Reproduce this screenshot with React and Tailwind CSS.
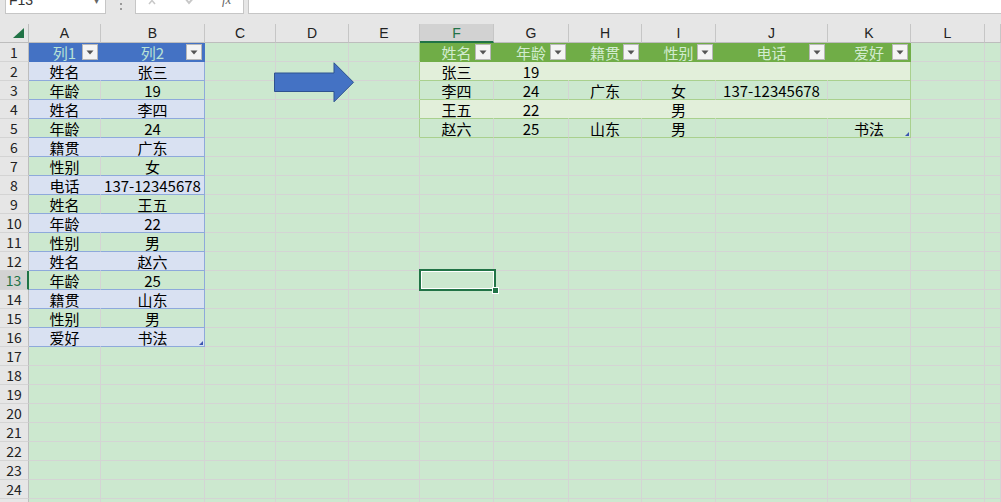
import React from "react";

const LETTERS = ["A", "B", "C", "D", "E", "F", "G", "H", "I", "J", "K", "L", "M"];
const ROWS = 25;

const LEFT = [
  ["列1", "列2"],
  ["姓名", "张三"],
  ["年龄", "19"],
  ["姓名", "李四"],
  ["年龄", "24"],
  ["籍贯", "广东"],
  ["性别", "女"],
  ["电话", "137-12345678"],
  ["姓名", "王五"],
  ["年龄", "22"],
  ["性别", "男"],
  ["姓名", "赵六"],
  ["年龄", "25"],
  ["籍贯", "山东"],
  ["性别", "男"],
  ["爱好", "书法"],
];

const RIGHT = [
  ["姓名", "年龄", "籍贯", "性别", "电话", "爱好"],
  ["张三", "19", "", "", "", ""],
  ["李四", "24", "广东", "女", "137-12345678", ""],
  ["王五", "22", "", "男", "", ""],
  ["赵六", "25", "山东", "男", "", "书法"],
];

function Dropdown() {
  return (
    <div className="absolute right-[2px] top-[1px] flex h-[16px] w-[16px] items-center justify-center border border-[#b8b8b8] bg-[#f4f4f4]">
      <svg width="8" height="5" viewBox="0 0 8 5">
        <path d="M0.5 0.5 L7.5 0.5 L4 4.5 Z" fill="#555" />
      </svg>
    </div>
  );
}

function Cell({ r, c }) {
  // r: 1-based row, c: 0-based column
  let bg = "bg-[#cce8cf]";
  let br = "border-r-[#d4d4d4]";
  let bb = "border-b-[#d4d4d4]";
  let text = "";
  let color = "text-black";
  let header = false;
  let corner = false;

  if (c <= 1 && r <= 16) {
    text = LEFT[r - 1][c];
    if (r === 1) {
      header = true;
      bg = "bg-[#4472c4]";
      br = "border-r-[#4472c4]";
      bb = "border-b-[#4472c4]";
      color = "text-[#b8e2d6]";
    } else if (r % 2 === 0) {
      bg = "bg-[#d9e1f2]";
      br = c === 1 ? "border-r-[#8ea9db]" : "border-r-[#d9e1f2]";
      bb = "border-b-[#8ea9db]";
    } else {
      br = c === 1 ? "border-r-[#8ea9db]" : "border-r-[#d4d4d4]";
      bb = "border-b-[#8ea9db]";
    }
    if (r === 16 && c === 1) corner = true;
  } else if (c >= 5 && c <= 10 && r <= 5) {
    text = RIGHT[r - 1][c - 5];
    if (r === 1) {
      header = true;
      bg = "bg-[#70ad47]";
      br = "border-r-[#70ad47]";
      bb = "border-b-[#70ad47]";
      color = "text-[#d2ecd0]";
    } else if (r % 2 === 0) {
      bg = "bg-[#e2efda]";
      br = c === 10 ? "border-r-[#a9d08e]" : "border-r-[#e2efda]";
      bb = "border-b-[#a9d08e]";
    } else {
      br = c === 10 ? "border-r-[#a9d08e]" : "border-r-[#d4d4d4]";
      bb = "border-b-[#a9d08e]";
    }
    if (r === 5 && c === 10) corner = true;
  } else if (c === 4 && r <= 5) {
    br = "border-r-[#a9d08e]";
  }

  return (
    <div
      className={`relative flex items-center justify-center overflow-visible whitespace-nowrap border-r border-b text-[15px] leading-none ${bg} ${br} ${bb} ${color}`}
    >
      <span className="pt-[1px]">{text}</span>
      {header && <Dropdown />}
      {corner && (
        <svg className="absolute bottom-[1px] right-[1px]" width="4" height="4" viewBox="0 0 4 4">
          <path d="M4 0 L4 4 L0 4 Z" fill="#3b55b0" />
        </svg>
      )}
    </div>
  );
}

function RowHeader({ r }) {
  const sel = r === 13;
  return (
    <div
      className={`flex items-center justify-center border-b border-b-[#d4d4d4] text-[14px] leading-none ${
        sel
          ? "border-r-2 border-r-[#217346] bg-[#d2d2d2] text-[#217346]"
          : "border-r border-r-[#bdbdbd] bg-[#e6e6e6] text-[#222]"
      }`}
    >
      {r}
    </div>
  );
}

export default function App() {
  return (
    <div
      className="relative h-[502px] w-[1001px] overflow-hidden bg-[#e6e6e6]"
      style={{ fontFamily: '"Noto Sans CJK SC", "Liberation Sans", sans-serif' }}
    >
      {/* formula bar, scrolled so only its lower edge shows */}
      <div className="flex h-[24px] items-start">
        <div className="ml-[5px] flex h-[14px] w-[101px] overflow-hidden border border-t-0 border-[#c6c6c6] bg-white">
          <span className="-mt-[9px] ml-[3px] text-[14px] leading-[18px] text-[#333]" style={{ fontFamily: '"Liberation Sans", sans-serif' }}>
            F13
          </span>
          <span className="-mt-[8px] ml-auto mr-[6px] text-[10px] text-[#666]">▾</span>
        </div>
        <div className="ml-[13px] flex h-[13px] w-[3px] flex-col items-center justify-center gap-[3px]">
          <div className="h-[2px] w-[2px] bg-[#9a9a9a]" />
          <div className="h-[2px] w-[2px] bg-[#9a9a9a]" />
        </div>
        <div className="ml-[13px] flex h-[14px] w-[109px] items-start overflow-hidden border border-t-0 border-[#c6c6c6] bg-white">
          <svg className="ml-[12px] -mt-[4px]" width="12" height="10" viewBox="0 0 12 10">
            <path d="M1 1 L7 8 M7 1 L1 8" stroke="#c8c8c8" strokeWidth="1.5" />
          </svg>
          <svg className="ml-[24px] -mt-[4px]" width="12" height="10" viewBox="0 0 12 10">
            <path d="M1 2 L5 7 L11 0" stroke="#c8c8c8" strokeWidth="2" fill="none" />
          </svg>
          <span className="-mt-[8px] ml-[26px] text-[13px] italic leading-[16px] text-[#666]" style={{ fontFamily: '"Liberation Serif", serif' }}>
            fx
          </span>
        </div>
        <div className="ml-[4px] h-[14px] flex-1 border border-t-0 border-r-0 border-[#c6c6c6] bg-white" />
      </div>

      {/* sheet grid */}
      <div className="grid grid-cols-[29px_72px_104px_71px_73px_71px_74px_75px_73px_74px_112px_83px_74px_1fr] auto-rows-[19px]">
        <div className="relative border-r border-b border-r-[#bdbdbd] border-b-[#bdbdbd] bg-[#e6e6e6]">
          <svg className="absolute bottom-[4px] right-[4px]" width="11" height="10" viewBox="0 0 11 10">
            <path d="M11 0 L11 10 L0 10 Z" fill="#217346" />
          </svg>
        </div>
        {LETTERS.map((l) =>
          l === "F" ? (
            <div
              key={l}
              className="flex items-center justify-center border-r border-b-2 border-r-[#c6c6c6] border-b-[#217346] bg-[#d2d2d2] text-[14px] leading-none text-[#217346]"
              style={{ fontFamily: '"Liberation Sans", sans-serif' }}
            >
              {l}
            </div>
          ) : (
            <div
              key={l}
              className="flex items-center justify-center border-r border-b border-r-[#c6c6c6] border-b-[#bdbdbd] bg-[#e6e6e6] text-[14px] leading-none text-[#222]"
              style={{ fontFamily: '"Liberation Sans", sans-serif' }}
            >
              {l === "M" ? "" : l}
            </div>
          )
        )}
        {Array.from({ length: ROWS }, (_, ri) => {
          const r = ri + 1;
          return (
            <React.Fragment key={r}>
              <RowHeader r={r} />
              {LETTERS.map((_, c) => (
                <Cell key={c} r={r} c={c} />
              ))}
            </React.Fragment>
          );
        })}
      </div>

      {/* block arrow shape */}
      <svg className="absolute left-[274px] top-[62px]" width="81" height="41" viewBox="0 0 81 41">
        <path d="M0.5 11 L60 11 L60 0.8 L79.5 20.3 L60 39.8 L60 29.5 L0.5 29.5 Z" fill="#4472c4" stroke="#2f528f" strokeWidth="1" />
      </svg>

      {/* active cell F13 */}
      <div className="absolute left-[419px] top-[269px] h-[22px] w-[77px] border-2 border-[#217346]">
        <div className="h-full w-full border border-white" />
        <div className="absolute -bottom-[5px] -right-[5px] h-[7px] w-[7px] border border-white bg-[#217346]" />
      </div>
    </div>
  );
}
